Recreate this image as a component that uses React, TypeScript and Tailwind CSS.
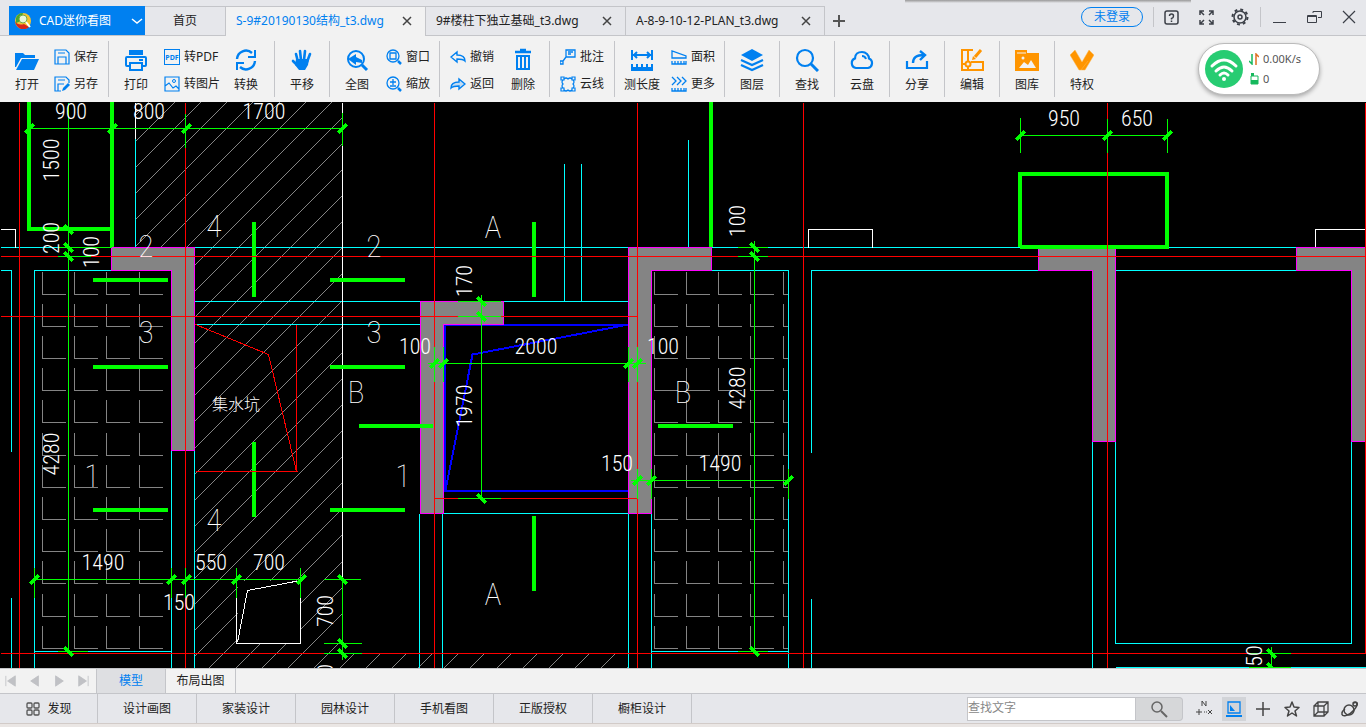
import { ReactNode } from 'react';
import clsx from 'clsx';

interface IconProps {
  children: ReactNode;
  size?: 'sm' | 'md' | 'lg';
  className?: string;
}

function Icon({ children, size = 'lg', className }: IconProps) {
  const box = { sm: '0 0 16 16', md: '0 0 20 20', lg: '0 0 24 24' }[size];
  return (
    <svg
      viewBox={box}
      fill="none"
      stroke="currentColor"
      aria-hidden="true"
      className={clsx(
        'shrink-0',
        size === 'sm' && 'h-4 w-4',
        size === 'md' && 'h-5 w-5',
        size === 'lg' && 'h-6 w-6',
        className
      )}
    >
      {children}
    </svg>
  );
}

const icons = {
  open: (
    <g fill="currentColor" stroke="none">
      <path d="M0 5h8l2 2h10v3H6L1 19H0z" />
      <path d="M7 11h17l-5 11H1z" />
    </g>
  ),
  print: (
    <>
      <path d="M5 2h14v5H5z" fill="currentColor" stroke="none" />
      <path d="M5 18H3q-1 0-1-1v-7q0-1 1-1h18q1 0 1 1v7q0 1-1 1h-2" strokeWidth="2" />
      <path d="M6 15h12v7H6z" strokeWidth="2" />
      <path d="M15 12h4" strokeWidth="2" />
    </>
  ),
  convert: (
    <>
      <path d="M3 11a9 9 0 0 1 15-6M21 13a9 9 0 0 1-15 6" strokeWidth="2.4" />
      <path d="M21 2v7h-7M3 22v-7h7" strokeWidth="2" />
    </>
  ),
  pan: (
    <>
      <path
        d="M8 14 6 6M11 12 10 3M14 12l1-9M17 14l3-8M7 17l-4-4"
        strokeWidth="2.6"
        strokeLinecap="round"
      />
      <path d="M6 11h13l-1 6-3 5H9l-4-5z" fill="currentColor" stroke="none" />
    </>
  ),
  fit: (
    <>
      <circle cx="11" cy="11" r="8" strokeWidth="2" />
      <path d="m17 17 5 5" strokeWidth="3" />
      <path d="m3 11 8-5v3l6 3v3l-6-1v3z" fill="currentColor" stroke="none" />
    </>
  ),
  trash: (
    <>
      <path d="M4 4h16M9 2h6" strokeWidth="2.4" />
      <path d="M6 8h12v13H6zM10 8v13M14 8v13" strokeWidth="2" />
    </>
  ),
  measure: (
    <>
      <path d="M2 2v10M22 2v10M3 7h18M7 4 4 7l3 3M17 4l3 3-3 3" strokeWidth="2" />
      <path d="M1 16h2v3h3v-3h2v3h3v-3h2v3h3v-3h2v3h3v-3h2v7H1z" fill="currentColor" stroke="none" />
    </>
  ),
  layers: (
    <>
      <path d="m12 1 11 6-11 6L1 7z" fill="currentColor" stroke="none" />
      <path d="m1 12 11 5 11-5M1 17l11 5 11-5" strokeWidth="2.2" />
    </>
  ),
  find: (
    <>
      <circle cx="10" cy="10" r="8" strokeWidth="2.2" />
      <path d="m16 16 7 7" strokeWidth="3" />
    </>
  ),
  cloud: (
    <>
      <path
        d="M6 20a5 5 0 0 1-1-9.600C5 6 8 4 12 4s7 3 7 6.500A5 5 0 0 1 18 20z"
        strokeWidth="2.2"
      />
      <path d="M12 8q3 0 4 3" strokeWidth="2" />
    </>
  ),
  share: (
    <>
      <path d="M2 13v7h20v-7" strokeWidth="2.2" />
      <path d="M8 15c0-5 3-8 11-8M15 3l5 4-5 5" strokeWidth="2.4" />
    </>
  ),
  edit: (
    <>
      <path d="M13 2H2v20h21v-8H11M2 16h9M8 2v20" strokeWidth="2" />
      <circle cx="8" cy="16" r="2.500" fill="#f2f2f2" strokeWidth="2" />
      <path d="m15 9 6-7" strokeWidth="3" />
      <path d="m12 12 1-4 3 3z" fill="currentColor" stroke="none" />
    </>
  ),
  gallery: (
    <>
      <path d="M0 2h12v3h12v18H0z" fill="currentColor" stroke="none" />
      <path d="M2 5h9" stroke="#f2f2f2" strokeWidth="1" />
      <path d="m4 20 5-6 4 3 3-5 5 8z" fill="#f2f2f2" stroke="none" />
      <circle cx="8" cy="10" r="1.500" fill="#f2f2f2" stroke="none" />
    </>
  ),
  vip: (
    <path d="m0 7 5-5 7 12 7-12 5 5-9 15h-6zM11 22l7-9" fill="currentColor" stroke="#ffb851" strokeWidth="0.500" />
  ),
  save: <path d="M1 1h11l3 3v11H1zM4 15V8h8v7M4 4h7" strokeWidth="1.2" />,
  saveAs: (
    <>
      <path d="M7 15H1V1h11l3 3v3M4 15V8h6M4 4h7" strokeWidth="1.2" />
      <path d="m8 15 1-3 5-5 2 2-5 5z" fill="currentColor" stroke="none" />
    </>
  ),
  picture: (
    <>
      <path d="M1 1h14v14H1zM1 10l4-3 4 5 3-2 3 3" strokeWidth="1.2" />
      <circle cx="10" cy="5" r="1.500" />
    </>
  ),
  window: (
    <>
      <circle cx="7" cy="7" r="6" strokeWidth="1.300" />
      <path d="M4 4h6v6H4z" strokeWidth="1.300" />
      <path d="m12 12 3 3" strokeWidth="2.500" />
    </>
  ),
  zoom: (
    <>
      <circle cx="7" cy="7" r="6" strokeWidth="1.300" />
      <path d="M4 6h6M7 3v6M4 10h6" strokeWidth="1.300" />
      <path d="m12 12 3 3" strokeWidth="2.500" />
    </>
  ),
  undo: <path d="m1 8 6-5v3c5 0 8 2 8 6-2-2-4-2-8-2v3z" strokeWidth="1.400" />,
  redo: <path d="M15 8 9 3v3c-5 0-8 2-8 6 2-2 4-2 8-2v3z" fill="#0080f033" strokeWidth="1.400" />,
  comment: <path d="M6 1h9v7H6zM8 3h5M8 5h3M6 8l-3 4M0 12h3v3H0z" strokeWidth="1.300" />,
  cloudLine: (
    <g strokeWidth="1.200">
      <path d="M4 3q2-2 4 0 2-2 4 0M4 14q2 2 4 0 2 2 4 0M3 4q-2 2 0 4-2 2 0 4M13 4q2 2 0 4 2 2 0 4" />
      <path d="M1 1h3v3H1zM12 1h3v3h-3zM1 12h3v3H1zM12 12h3v3h-3z" />
    </g>
  ),
  area: <path d="M1 9V2l14 5v2zM1 12v3h14v-3M4 12v3M7 12v3M10 12v3M13 12v3" strokeWidth="1.300" />,
  more: (
    <path
      d="m1 1 4 4-4 4M6 1l4 4-4 4M11 1l4 4-4 4M1 12v3h14v-3M4 12v3M7 12v3M10 12v3M13 12v3"
      strokeWidth="1.300"
    />
  ),
};

type IconName = keyof typeof icons | 'pdf';

interface ToolProps {
  icon: IconName;
  label: string;
  gold?: boolean;
}

function BigTool({ icon, label, gold }: ToolProps) {
  return (
    <button className="flex w-[54px] shrink-0 flex-col items-center">
      <Icon className={gold ? 'text-[#ff9500]' : 'text-[#0080f0]'}>
        {icon !== 'pdf' && icons[icon]}
      </Icon>
      <span className="mt-1 leading-[18px] whitespace-nowrap">{label}</span>
    </button>
  );
}

function SmallTool({ icon, label }: ToolProps) {
  return (
    <button className="flex h-[18px] items-center gap-1 whitespace-nowrap">
      {icon === 'pdf' ? (
        <span className="grid h-4 w-4 place-items-center border border-[#0080f0] text-[7px] leading-none font-bold text-[#0080f0]">
          PDF
        </span>
      ) : (
        <Icon size="sm" className="text-[#0080f0]">
          {icons[icon]}
        </Icon>
      )}
      {label}
    </button>
  );
}

function ToolStack({ items, className }: { items: ToolProps[]; className?: string }) {
  return (
    <div className={clsx('flex w-14 shrink-0 flex-col gap-[9px]', className)}>
      {items.map((item) => (
        <SmallTool key={item.label} {...item} />
      ))}
    </div>
  );
}

function Group({ children, className }: { children: ReactNode; className?: string }) {
  return (
    <div className={clsx('flex h-14 shrink-0 border-r border-[#c4c5c9] pt-[7px]', className)}>
      {children}
    </div>
  );
}

const singles: ToolProps[] = [
  { icon: 'layers', label: '图层' },
  { icon: 'find', label: '查找' },
  { icon: 'cloud', label: '云盘' },
  { icon: 'share', label: '分享' },
  { icon: 'edit', label: '编辑', gold: true },
  { icon: 'gallery', label: '图库', gold: true },
  { icon: 'vip', label: '特权', gold: true },
];

function NetWidget() {
  return (
    <div className="absolute top-[7px] right-[46px] flex h-[52px] w-[122px] items-center rounded-full border border-[#bbb] bg-white pl-1.5 text-[11px] text-[#555] shadow-[0_2px_4px_rgba(0,0,0,0.3)]">
      <svg viewBox="0 0 38 38" className="h-[38px] w-[38px] shrink-0" fill="none" aria-hidden="true">
        <circle cx="19" cy="19" r="19" fill="#27cc72" />
        <g stroke="#fff" strokeWidth="3" strokeLinecap="round">
          <path d="M7 16q12-12 24 0M11 21q8-8 16 0M15 25q4-4 8 0" />
        </g>
        <circle cx="19" cy="29" r="2" fill="#fff" />
      </svg>
      <div className="ml-1.5 flex flex-col gap-1">
        <div className="flex items-center gap-1 leading-4">
          <svg viewBox="0 0 10 12" className="h-3 w-2.5" fill="none" strokeWidth="1.500" aria-hidden="true">
            <path d="M3 1v10L0 8" stroke="#16b85c" />
            <path d="M7 12V1l3 3" stroke="#e07020" />
          </svg>
          0.00K/s
        </div>
        <div className="flex items-center gap-1 leading-4">
          <svg viewBox="0 0 10 12" className="h-3 w-2.5" fill="none" aria-hidden="true">
            <path d="M2 3h7v8H2z" stroke="#16b85c" />
            <path d="M2 7h7v4H2zM2 0h3v3H2z" fill="#16b85c" />
          </svg>
          0
        </div>
      </div>
    </div>
  );
}

function Toolbar() {
  return (
    <div className="relative flex h-[66px] shrink-0 bg-[#f2f2f2] pt-[5px]">
      <Group className="w-[109px]">
        <BigTool icon="open" label="打开" />
        <ToolStack
          items={[
            { icon: 'save', label: '保存' },
            { icon: 'saveAs', label: '另存' },
          ]}
        />
      </Group>
      <Group className="w-[166px]">
        <BigTool icon="print" label="打印" />
        <ToolStack
          className="pl-px"
          items={[
            { icon: 'pdf', label: '转PDF' },
            { icon: 'picture', label: '转图片' },
          ]}
        />
        <BigTool icon="convert" label="转换" />
      </Group>
      <Group className="w-[55px]">
        <BigTool icon="pan" label="平移" />
      </Group>
      <Group className="w-[110px]">
        <BigTool icon="fit" label="全图" />
        <ToolStack
          className="pl-0.5"
          items={[
            { icon: 'window', label: '窗口' },
            { icon: 'zoom', label: '缩放' },
          ]}
        />
      </Group>
      <Group className="w-[110px] pl-2.5">
        <ToolStack
          className="-mr-2.5"
          items={[
            { icon: 'undo', label: '撤销' },
            { icon: 'redo', label: '返回' },
          ]}
        />
        <BigTool icon="trash" label="删除" />
      </Group>
      <Group className="w-[65px] pl-2.5">
        <ToolStack
          items={[
            { icon: 'comment', label: '批注' },
            { icon: 'cloudLine', label: '云线' },
          ]}
        />
      </Group>
      <Group className="w-[110px]">
        <BigTool icon="measure" label="测长度" />
        <ToolStack
          className="pl-0.5"
          items={[
            { icon: 'area', label: '面积' },
            { icon: 'more', label: '更多' },
          ]}
        />
      </Group>
      {singles.map((tool, i) => (
        <Group key={tool.label} className={clsx('w-[55px]', i === singles.length - 1 && 'border-r-0')}>
          <BigTool {...tool} />
        </Group>
      ))}
      <NetWidget />
    </div>
  );
}

const files = ['S-9#20190130结构_t3.dwg', '9#楼柱下独立基础_t3.dwg', 'A-8-9-10-12-PLAN_t3.dwg'];

function TitleBar() {
  return (
    <header className="relative flex h-9 shrink-0 items-end border-b border-[#c4c5c9] bg-[#e6e7eb] pl-[9px]">
      <div className="absolute top-0 right-[175px] h-[3px] w-[286px] bg-linear-to-b from-[#999] to-[#e6e7eb]" />
      <button className="flex h-[29px] w-[136px] items-center bg-[#0080f0] pl-1.5 text-white">
        <svg viewBox="0 0 16 16" className="h-4 w-4" aria-hidden="true">
          <circle cx="8" cy="8" r="8" fill="#f4c430" />
          <path d="M0 8q3 5 9 3l5 3q-3 3-8 2-5-2-6-8z" fill="#d9261c" />
          <path d="M1 5q2-5 7-5L6 8 1 10z" fill="#47a82e" />
          <circle cx="8" cy="6" r="4" fill="#e9f7d9" stroke="#78a843" />
          <path d="m11 9 4 5" stroke="#fff" strokeWidth="2" />
        </svg>
        <span className="ml-2">CAD迷你看图</span>
        <Icon size="sm" className="ml-auto">
          <path d="m3 6 5 4 5-4" strokeWidth="1.500" />
        </Icon>
      </button>
      <nav className="flex self-end">
        <button className="h-[29px] w-20 border-t border-[#c4c5c9]">首页</button>
        {files.map((file, i) => (
          <div
            key={file}
            className={clsx(
              'flex w-[200px] items-center justify-between border-t border-l border-[#c4c5c9] pr-[13px] pl-2.5',
              i === 0 ? '-mb-px h-[30px] bg-[#f2f2f2] pb-px text-[#0080f0]' : 'h-[29px]',
              i === files.length - 1 && 'border-r'
            )}
          >
            <button className="whitespace-nowrap">{file}</button>
            <button aria-label="关闭标签" className="text-[#444]">
              <svg viewBox="0 0 10 10" className="h-2.5 w-2.5" aria-hidden="true">
                <path d="m1 1 8 8M9 1 1 9" stroke="currentColor" strokeWidth="1.500" />
              </svg>
            </button>
          </div>
        ))}
        <button aria-label="新建标签" className="flex h-[29px] items-center pl-2 text-[#555]">
          <svg viewBox="0 0 12 12" className="h-3 w-3" aria-hidden="true">
            <path d="M0 6h12M6 0v12" stroke="currentColor" strokeWidth="2" />
          </svg>
        </button>
      </nav>
      <div className="mb-2 ml-auto flex h-5 items-center pr-[7px] text-[#3c4048]">
        <button className="h-5 w-[62px] rounded-full border border-[#0080f0] text-[#0080f0]">未登录</button>
        <span className="ml-2.5 h-5 w-px bg-[#c4c5c9]" />
        <button aria-label="帮助" className="ml-[7px]">
          <Icon size="md">
            <rect x="4" y="4" width="13" height="13" rx="2" strokeWidth="1.500" />
            <path d="M8.500 9q0-2 2-2t2 2-2 2.500v1M10.500 13.500V15" strokeWidth="1.500" />
          </Icon>
        </button>
        <button aria-label="全屏" className="ml-[15px]">
          <Icon size="md">
            <path
              d="M4 8V4h4M4 4l4 4M13 4h4v4M17 4l-4 4M4 13v4h4M4 17l4-4M17 13v4h-4M17 17l-4-4"
              strokeWidth="1.500"
            />
          </Icon>
        </button>
        <button aria-label="设置" className="ml-3.5">
          <Icon size="md">
            <circle cx="10" cy="10" r="6" strokeWidth="1.500" />
            <circle cx="10" cy="10" r="7.500" strokeWidth="2" strokeDasharray="2.900 2.990" />
            <circle cx="10" cy="10" r="2" strokeWidth="1.500" />
          </Icon>
        </button>
        <span className="ml-2.5 h-5 w-px bg-[#c4c5c9]" />
        <button aria-label="最小化" className="ml-2">
          <Icon size="md">
            <path d="M4 15.500h13" />
          </Icon>
        </button>
        <button aria-label="还原" className="ml-4">
          <Icon size="md">
            <path d="M2.500 8.500h9v7h-9zM2 9.500h10M8 6V4.500h8.500v6H13" />
          </Icon>
        </button>
        <button aria-label="关闭" className="ml-3.5">
          <Icon size="md">
            <path d="m4 4 12 12M16 4 4 16" strokeWidth="1.200" />
          </Icon>
        </button>
      </div>
    </header>
  );
}

// drawing, in sheet units
const columns = [
  'M111 247H194V450H171V270H111Z',
  'M420 301H503V324H443V513H420Z',
  'M628 247H711V270H651V513H628Z',
  'M1038 247H1115V441H1092V270H1038Z',
  'M1370 247H1296V270H1351V441H1370Z',
];

const cyan =
  'M0 247H1366M0 270H11V451M34 668V270H111M135 138V247M11 597V668M34 651H171M171 450V668M194 450V668' +
  'M194 301H420M194 324H420M503 301H628M564 163V301M581 163V301M688 139V247M711 270H788V668M651 651H788' +
  'M443 513H628M419 513V668M442 513V668M628 513V668M651 513V668M811 452V270H1038M811 598V668' +
  'M1115 270H1296M1092 441V668M1115 441V643H1351V441M1115 667H1366';

const red =
  'M19 102V668M185 102V668M434 102V668M637 102V668M803 102V668M1107 102V668M1365 102V653' +
  'M0 256H1366M0 316H637M0 653H1366M434 498H637M195 324L268 354L296 471M296 324V471M195 471H297';

const white =
  'M0 229H15V247M135 102V138M342 102V579M808 247V229H872V247M1315 247V229H1366' +
  'M236 597V643H300V597M237 642L247 590L300 580';

const green =
  'M29 128H342M68 102V651M185 113V147M342 112V145M57 247H111M57 256H90M34 579H301M34 567V597M171 567V597' +
  'M185 567V597M236 567V597M300 567V597M323 579H360M323 643H361M323 653H361M342 579V659M57 651H87' +
  'M427 363H645M434 346V381M443 346V381M628 346V381M637 346V381M481 294V498M457 301H500M457 316H500M457 498H500' +
  'M630 480H788M637 468V498M651 468V498M788 468V498M754 240V651M737 247H767M737 256H767M737 651H767' +
  'M1020 117V152M1107 118V152M1167 118V152M1020 135H1167M1271 646V668M1248 653H1290M1248 667H1290';

const bars =
  'M29 102V229H112M112 102V247M254 222V297M254 442V517M93 280H168M93 367H168M93 510H168' +
  'M330 280H405M330 367H405M330 510H405M711 102V247M1020 247V174H1167V247H1020M359 426H433M658 426H733' +
  'M534 222V297M534 516V591';

const slashes = [
  [29, 128], [112, 128], [186, 128], [342, 128],
  [34, 579], [171, 579], [186, 579], [236, 579], [301, 579],
  [434, 363], [443, 363], [628, 363], [637, 363],
  [637, 480], [651, 480], [788, 480],
  [1020, 135], [1107, 135], [1167, 135],
];

const backslashes = [
  [68, 229], [68, 247], [68, 256], [68, 651],
  [342, 579], [342, 643], [342, 653],
  [481, 301], [481, 316], [481, 498],
  [754, 247], [754, 256], [754, 651],
  [1271, 653], [1271, 667],
];

const tickPath = [
  ...slashes.map(([x, y]) => `M${x - 3} ${y + 3}l6-6`),
  ...backslashes.map(([x, y]) => `M${x - 3} ${y - 3}l6 6`),
].join('');

const rows = [294, 326, 358, 390, 422, 455, 487, 519, 551, 583, 616, 648];
const grid = (cols: number[], right: number) =>
  rows
    .flatMap((y) => cols.map((x) => `M${x} ${y - 23}V${y}H${Math.min(x + 23, right)}`))
    .join('');

const hatch = Array.from({ length: 42 }, (_, i) => {
  const sum = Math.round(251 + i * 26.1);
  return `M${sum - 102} 102L${sum - 668} 668`;
}).join('');

// centre points; the last list is turned to read upwards
const dims: [string, number, number][] = [
  ['900', 71, 111], ['800', 149, 111], ['1700', 264, 111], ['1490', 103, 562], ['150', 179, 602],
  ['550', 211, 562], ['700', 269, 562], ['100', 415, 346], ['2000', 536, 346], ['100', 663, 346],
  ['150', 617, 463], ['1490', 720, 463], ['950', 1064, 118], ['650', 1137, 118],
];
const marks: [string, number, number][] = [
  ['4', 214, 226], ['2', 146, 246], ['2', 374, 246], ['3', 146, 332], ['3', 374, 332], ['1', 92, 476],
  ['1', 403, 476], ['4', 214, 520], ['A', 493, 227], ['A', 493, 594], ['B', 356, 392], ['B', 683, 392],
];
const upright: [string, number, number][] = [
  ['1500', 51, 160], ['200', 51, 238], ['100', 91, 252], ['4280', 51, 454], ['700', 325, 611],
  ['170', 464, 281], ['1970', 464, 406], ['100', 737, 221], ['4280', 737, 388], ['50', 1254, 656],
  ['150', 325, 680],
];

function Drawing() {
  return (
    <main className="min-h-0 flex-1 overflow-hidden bg-black">
      <svg
        viewBox="0 102 1366 566"
        preserveAspectRatio="xMinYMin slice"
        className="block h-full w-full"
        fill="none"
        role="img"
        aria-label="结构图"
      >
        <clipPath id="pit">
          <path d="M135 102H342V654H628V668H195V247H135Z" />
        </clipPath>
        <path d={hatch} stroke="#848484" clipPath="url(#pit)" />
        <g transform="translate(0.5 0.5)" shapeRendering="crispEdges">
          <path d="M237 580H300V643H237Z" fill="#000" />
          <path d={grid([42, 74, 106, 139], 163)} stroke="#848484" />
          <path d={grid([654, 686, 718, 750, 783], 788)} stroke="#848484" />
          <path d={cyan} stroke="#00ffff" />
          <path d={white} stroke="#fff" />
          <path d="M444 324H628V490H444ZM628 324L472 354L445 490" stroke="#0000ff" strokeWidth="2" />
          {columns.map((d) => (
            <path key={d} d={d} fill="#848484" stroke="#ff00ff" />
          ))}
        </g>
        <path d={bars} stroke="#00ff00" strokeWidth="4" shapeRendering="crispEdges" />
        <g transform="translate(0.5 0.5)" shapeRendering="crispEdges">
          <path d={red} stroke="#ff0000" />
          <path d={green} stroke="#00ff00" />
          <path d={tickPath} stroke="#00ff00" strokeWidth="4" strokeLinecap="round" />
        </g>
        <g
          fill="#fff"
          textAnchor="middle"
          className="font-['Roboto_Condensed','Liberation_Sans_Narrow','Noto_Sans_CJK_SC',sans-serif] font-light"
        >
          {dims.map(([text, x, y]) => (
            <text key={`${x}-${y}`} x={x} y={y + 8} className="text-[22px]">
              {text}
            </text>
          ))}
          {marks.map(([text, x, y]) => (
            <text key={`${x}-${y}`} x={x} y={y + 11} className="text-[32px] font-thin">
              {text}
            </text>
          ))}
          {upright.map(([text, x, y]) => (
            <text
              key={`${x}-${y}`}
              transform={`translate(${x + 8} ${y}) rotate(-90)`}
              className="text-[22px]"
            >
              {text}
            </text>
          ))}
          <text x="236" y="410" className="text-[16px]">
            集水坑
          </text>
        </g>
      </svg>
    </main>
  );
}

const pagers = [
  { label: '第一页', d: 'M1 1v12M12 1v12L3 7z' },
  { label: '上一页', d: 'M11 1v12L2 7z' },
  { label: '下一页', d: 'M3 1v12l9-6z' },
  { label: '最后一页', d: 'M2 1v12l9-6zM13 1v12' },
];

function SheetTabs() {
  return (
    <div className="flex h-[26px] shrink-0 border-y border-[#c4c5c9] bg-[#f2f2f2]">
      <div className="flex w-[97px] items-center gap-3 border-r border-[#c4c5c9] pl-[5px]">
        {pagers.map(({ label, d }) => (
          <button key={label} aria-label={label}>
            <svg viewBox="0 0 14 14" className="h-3 w-3" aria-hidden="true">
              <path d={d} fill="#c0c1c5" stroke="#c0c1c5" />
            </svg>
          </button>
        ))}
      </div>
      <button className="w-[69px] border-r border-[#c4c5c9] bg-[#dedfe2] text-[#0080f0]">模型</button>
      <button className="w-[70px] border-r border-[#c4c5c9]">布局出图</button>
    </div>
  );
}

const links = ['设计画图', '家装设计', '园林设计', '手机看图', '正版授权', '橱柜设计'];

function StatusBar() {
  return (
    <footer className="shrink-0 border-b-[3px] border-[#eae6e4] bg-[#e6e7eb]">
      <div className="flex h-[30px] border-b border-[#d2cbc8]">
        <a href="#find" className="flex w-[98px] items-center justify-center gap-1.5 border-r border-[#c4c5c9]">
          <Icon size="sm" className="text-[#555]">
            <rect x="2" y="2" width="5" height="5" rx="1" strokeWidth="1.300" />
            <rect x="9" y="2" width="5" height="5" rx="1" strokeWidth="1.300" />
            <rect x="2" y="9" width="5" height="5" rx="1" strokeWidth="1.300" />
            <rect x="9" y="9" width="5" height="5" rx="1" strokeWidth="1.300" />
          </Icon>
          发现
        </a>
        {links.map((link) => (
          <a
            key={link}
            href={`#${link}`}
            className="flex w-[99px] items-center justify-center border-r border-[#c4c5c9]"
          >
            {link}
          </a>
        ))}
        <div className="ml-auto flex items-center pr-1.5 text-[#444]">
          <input
            aria-label="查找文字"
            placeholder="查找文字"
            className="h-6 w-[169px] border border-[#c4c5c9] bg-white pb-0.5 outline-none placeholder:text-[#888]"
          />
          <button
            aria-label="查找"
            className="grid h-6 w-[47px] place-items-center rounded-r-sm border border-l-0 border-[#c4c5c9] bg-[#d6d7d9] text-[#666]"
          >
            <Icon size="md">
              <circle cx="8" cy="8" r="5" strokeWidth="1.500" />
              <path d="m12 12 6 6" strokeWidth="2" />
            </Icon>
          </button>
          <button aria-label="坐标" className="ml-[11px]">
            <Icon size="md">
              <path d="M8 7V2l4 5V2M2 13h6M5 10v6M10 13h1M12 13h1M14 11l4 4M18 11l-4 4" />
            </Icon>
          </button>
          <button
            aria-label="测量"
            className="ml-2 grid h-6 w-6 place-items-center bg-[#d2d4d8] text-[#0080f0]"
          >
            <Icon size="md">
              <path d="M4 3h12v11H4z" strokeWidth="1.300" />
              <path d="M2 17h16" strokeWidth="2" />
              <path d="M6 6v6h5z" fill="currentColor" stroke="none" />
            </Icon>
          </button>
          <div className="ml-[7px] flex gap-[9px]">
            <button aria-label="十字光标">
              <Icon size="md">
                <path d="M3 10h14M10 3v14" strokeWidth="1.500" />
              </Icon>
            </button>
            <button aria-label="收藏">
              <Icon size="md">
                <path
                  d="m10 3 2 5 5 .500-4 3.500 1.500 5-4.500-3-4.500 3L7 12 3 8.500 8 8z"
                  strokeWidth="1.500"
                  strokeLinejoin="round"
                />
              </Icon>
            </button>
            <button aria-label="三维">
              <Icon size="md">
                <path d="M3 7h10v10H3zM3 7l4-4h10v10l-4 4M13 7l4-4M7 3v10h10M7 13l-4 4" strokeWidth="1.300" />
              </Icon>
            </button>
            <button aria-label="轨道">
              <Icon size="md">
                <circle cx="9" cy="11" r="5" strokeWidth="1.500" />
                <path d="M13 4c5-2 6 1 1 7S1 19 2 14q0-2 3-4" strokeWidth="1.500" />
                <circle cx="15" cy="5" r="2" strokeWidth="1.500" />
              </Icon>
            </button>
          </div>
        </div>
      </div>
    </footer>
  );
}

export default function App() {
  return (
    <div className="flex h-screen flex-col overflow-hidden bg-[#f2f2f2] font-['Noto_Sans','Noto_Sans_CJK_SC',sans-serif] text-xs text-[#222]">
      <TitleBar />
      <Toolbar />
      <Drawing />
      <SheetTabs />
      <StatusBar />
    </div>
  );
}
